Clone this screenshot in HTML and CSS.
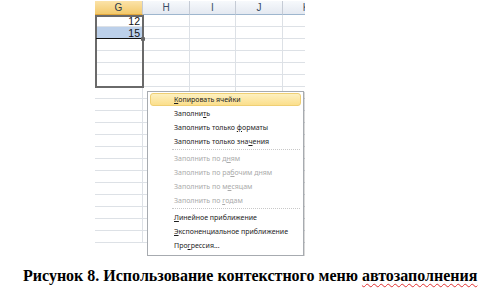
FILE: index.html
```html
<!DOCTYPE html>
<html lang="ru">
<head>
<meta charset="utf-8">
<link rel="stylesheet" href="styles.css">
</head>
<body>
<div class="page">
  <div class="sheet">
    <div class="hdr">
      <div class="hc g">G</div>
      <div class="hc w47">H</div>
      <div class="hc w46">I</div>
      <div class="hc w47">J</div>
      <div class="hc rest">K</div>
    </div>
    <div class="rows">
      <div class="row"><div class="c g num">12</div><div class="c w47"></div><div class="c w46"></div><div class="c w47"></div><div class="c rest"></div></div>
      <div class="row"><div class="c g num sel">15</div><div class="c w47"></div><div class="c w46"></div><div class="c w47"></div><div class="c rest"></div></div>
      <div class="row"><div class="c g"></div><div class="c w47"></div><div class="c w46"></div><div class="c w47"></div><div class="c rest"></div></div>
      <div class="row"><div class="c g"></div><div class="c w47"></div><div class="c w46"></div><div class="c w47"></div><div class="c rest"></div></div>
      <div class="row"><div class="c g"></div><div class="c w47"></div><div class="c w46"></div><div class="c w47"></div><div class="c rest"></div></div>
      <div class="row"><div class="c g"></div><div class="c w47"></div><div class="c w46"></div><div class="c w47"></div><div class="c rest"></div></div>
      <div class="row"><div class="c g"></div><div class="c w47"></div><div class="c w46"></div><div class="c w47"></div><div class="c rest"></div></div>
      <div class="row"><div class="c g"></div><div class="c w47"></div><div class="c w46"></div><div class="c w47"></div><div class="c rest"></div></div>
      <div class="row"><div class="c g"></div><div class="c w47"></div><div class="c w46"></div><div class="c w47"></div><div class="c rest"></div></div>
      <div class="row"><div class="c g"></div><div class="c w47"></div><div class="c w46"></div><div class="c w47"></div><div class="c rest"></div></div>
      <div class="row"><div class="c g"></div><div class="c w47"></div><div class="c w46"></div><div class="c w47"></div><div class="c rest"></div></div>
      <div class="row"><div class="c g"></div><div class="c w47"></div><div class="c w46"></div><div class="c w47"></div><div class="c rest"></div></div>
      <div class="row"><div class="c g"></div><div class="c w47"></div><div class="c w46"></div><div class="c w47"></div><div class="c rest"></div></div>
      <div class="row"><div class="c g"></div><div class="c w47"></div><div class="c w46"></div><div class="c w47"></div><div class="c rest"></div></div>
      <div class="row"><div class="c g"></div><div class="c w47"></div><div class="c w46"></div><div class="c w47"></div><div class="c rest"></div></div>
      <div class="row"><div class="c g"></div><div class="c w47"></div><div class="c w46"></div><div class="c w47"></div><div class="c rest"></div></div>
      <div class="row"><div class="c g"></div><div class="c w47"></div><div class="c w46"></div><div class="c w47"></div><div class="c rest"></div></div>
      <div class="row"><div class="c g"></div><div class="c w47"></div><div class="c w46"></div><div class="c w47"></div><div class="c rest"></div></div>
      <div class="row"><div class="c g"></div><div class="c w47"></div><div class="c w46"></div><div class="c w47"></div><div class="c rest"></div></div>
    </div>
    <div class="range"></div>
    <div class="dragline"></div>
    <div class="handle"></div>
    <div class="menu">
      <div class="item hi"><u>К</u>опировать ячейки</div>
      <div class="item">Заполни<u>т</u>ь</div>
      <div class="item">Заполнить только <u>ф</u>орматы</div>
      <div class="item">Заполнить только зна<u>ч</u>ения</div>
      <div class="sep"></div>
      <div class="item dis">Заполнить по д<u>н</u>ям</div>
      <div class="item dis">Заполнить по ра<u>б</u>очим дням</div>
      <div class="item dis">Заполнить по м<u>е</u>сяцам</div>
      <div class="item dis">Заполнить по <u>г</u>одам</div>
      <div class="sep"></div>
      <div class="item"><u>Л</u>инейное приближение</div>
      <div class="item"><u>Э</u>кспоненциальное приближение</div>
      <div class="item">Про<u>г</u>рессия...</div>
    </div>
  </div>
  <p class="caption">Рисунок 8. Использование контекстного меню <span class="spell">автозаполнения</span></p>
</div>
</body>
</html>
```

FILE: styles.css
```css
html, body {
  margin: 0;
  padding: 0;
  background: #fff;
}
.page {
  width: 490px;
  height: 290px;
  overflow: hidden;
}
.sheet {
  position: relative;
  margin-left: 95px;
  width: 210px;
  height: 256px;
  overflow: hidden;
  font-family: "Liberation Sans", Arial, sans-serif;
}
.hdr {
  display: flex;
  height: 14px;
  margin-top: 1px;
}
.hc {
  box-sizing: border-box;
  height: 14px;
  border-right: 1px solid #c5cbd5;
  border-bottom: 1px solid #9eb6ce;
  background: linear-gradient(#f7f9fc, #e4e9f1);
  color: #3b4d66;
  font-size: 10px;
  line-height: 13px;
  text-align: center;
}
.hc.g {
  background: linear-gradient(#fbe3a9, #f3c96b);
  border-bottom-color: #e2a73c;
  color: #2b3a4e;
}
.g { width: 48px; flex: none; }
.w47 { width: 47px; flex: none; }
.w46 { width: 46px; flex: none; }
.rest { width: 47px; flex: none; }
.rows { display: flex; flex-direction: column; }
.row { display: flex; height: 12px; }
.c {
  box-sizing: border-box;
  height: 12px;
  border-right: 1px solid #dde1e6;
  border-bottom: 1px solid #dde1e6;
}
.num {
  font-size: 10.5px;
  line-height: 12px;
  text-align: right;
  padding-right: 2px;
  color: #111;
}
.sel {
  background: #bcd0ea;
}
.range {
  position: absolute;
  left: 0;
  top: 15px;
  width: 49px;
  height: 73px;
  box-sizing: border-box;
  border: 2px solid #6a6a6a;
}
.dragline {
  position: absolute;
  left: 1px;
  top: 38px;
  width: 47px;
  height: 1px;
  background: #111;
}
.handle {
  position: absolute;
  left: 46px;
  top: 37px;
  width: 4px;
  height: 4px;
  background: #666;
  border-radius: 1px;
}
.menu {
  position: absolute;
  left: 52px;
  top: 91px;
  width: 157px;
  box-sizing: border-box;
  padding: 1px 2px 3px 2px;
  background: #fff;
  border: 1px solid #a7abb0;
  box-shadow: 1px 1px 1px rgba(0,0,0,0.15);
  font-family: "Noto Sans", "Open Sans", sans-serif;
  font-size: 7px;
}
.item {
  height: 14px;
  line-height: 14px;
  padding-left: 23px;
  color: #1e1e1e;
  white-space: nowrap;
  border: 1px solid transparent;
  box-sizing: border-box;
}
.item u {
  text-decoration-thickness: 0.5px;
  text-underline-offset: 1px;
}
.item.hi {
  background: linear-gradient(#fdf0c0, #fbdf8c);
  border-color: #efcf74;
  border-radius: 3px;
  height: 13px;
  line-height: 12px;
}
.item.dis { color: #aaaaaa; }
.sep {
  margin: 1px 1px 1px 22px;
  height: 0;
  border-top: 1px dotted #c8c8c8;
}
.caption {
  margin: 11px 0 0 23px;
  font-family: "Liberation Serif", "Times New Roman", serif;
  font-weight: bold;
  font-size: 16px;
  line-height: 18px;
  color: #000;
  white-space: nowrap;
}
.spell {
  text-decoration: underline wavy #e03030;
  text-decoration-thickness: 1px;
  text-underline-offset: 2px;
}
```
